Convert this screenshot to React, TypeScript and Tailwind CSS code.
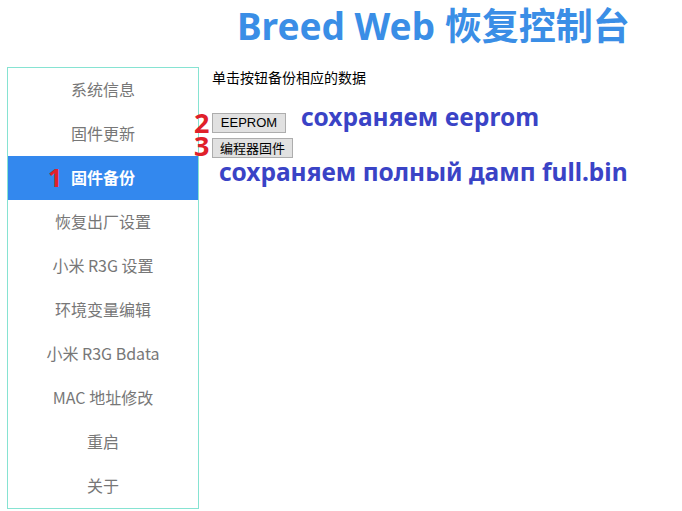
const menu = [
  "系统信息",
  "固件更新",
  "固件备份",
  "恢复出厂设置",
  "小米 R3G 设置",
  "环境变量编辑",
  "小米 R3G Bdata",
  "MAC 地址修改",
  "重启",
  "关于",
];

const cjk = "font-['Microsoft_YaHei','Noto_Sans_CJK_SC',sans-serif]";

export default function App() {
  return (
    <div className={`h-[511px] w-[682px] bg-white ${cjk}`}>
      {/* Title */}
      <div className="flex h-[67px] items-start pl-[237px]">
        <h1 className="font-['Noto_Sans','Noto_Sans_CJK_SC',sans-serif] text-[37px] font-bold leading-[52px] text-[#3a8ee6]">
          Breed Web 恢复控制台
        </h1>
      </div>

      <div className="flex">
        {/* Sidebar */}
        <nav className="ml-[7px] w-[192px] border border-[#86e3d2]">
          {menu.map((label, i) => {
            const active = i === 2;
            return (
              <div
                key={label}
                className={
                  active
                    ? "relative flex h-[44px] items-center justify-center bg-[#3388ee] pb-[3px] text-[16px] font-bold text-white"
                    : "flex h-[44px] items-center justify-center pb-[3px] text-[16px] text-[#777777]"
                }
              >
                {active && (
                  <span className="absolute left-[40px] top-[11px] font-['Noto_Sans',sans-serif] text-[25px] font-bold leading-[20px] text-[#e0202a]">
                    1
                  </span>
                )}
                {label}
              </div>
            );
          })}
        </nav>

        {/* Content */}
        <main className="flex flex-col pl-[13px]">
          <p className="text-[14px] leading-[20px] text-black">单击按钮备份相应的数据</p>

          <div className="relative mt-[26px] flex items-start">
            <span className="absolute -left-[18px] top-0 font-['Noto_Sans',sans-serif] text-[27px] font-bold leading-[20px] text-[#e0202a]">
              2
            </span>
            <button className="h-[20px] w-[74px] border border-[#adadad] bg-[#e1e1e1] font-['Liberation_Sans',sans-serif] text-[13px] leading-[18px] text-black">
              EEPROM
            </button>
            <span className="-mt-[8px] ml-[15px] font-['Noto_Sans',sans-serif] text-[24.5px] font-bold leading-[24px] text-[#3a43c6]">
              сохраняем eeprom
            </span>
          </div>

          <div className="relative mt-[5px] flex items-start">
            <span className="absolute -left-[18px] -top-[2px] font-['Noto_Sans',sans-serif] text-[27px] font-bold leading-[20px] text-[#e0202a]">
              3
            </span>
            <button className="h-[20px] w-[81px] border border-[#adadad] bg-[#e1e1e1] text-[13px] leading-[18px] text-black">
              编程器固件
            </button>
          </div>

          <p className="ml-[7px] mt-[2px] font-['Noto_Sans',sans-serif] text-[24.5px] font-bold leading-[24px] text-[#3a43c6]">
            сохраняем полный дамп full.bin
          </p>
        </main>
      </div>
    </div>
  );
}
